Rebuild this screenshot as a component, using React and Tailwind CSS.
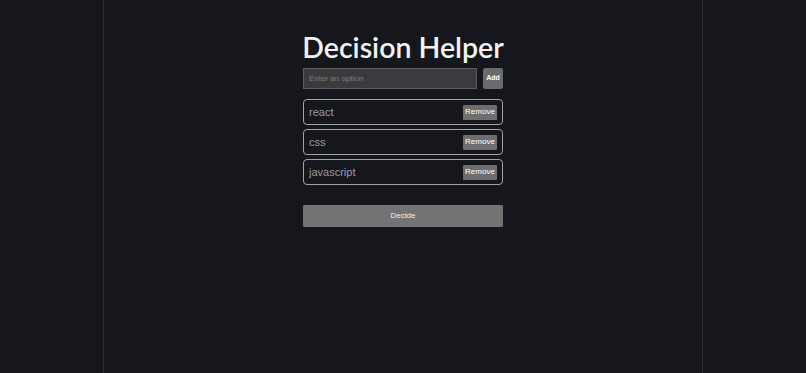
import React, { useState } from "react";

export default function App() {
  const [options, setOptions] = useState(["react", "css", "javascript"]);
  const [value, setValue] = useState("");

  const addOption = () => {
    if (!value.trim()) return;
    setOptions([...options, value.trim()]);
    setValue("");
  };

  return (
    <div className="min-h-[373px] w-full bg-[#16171d] font-['Liberation_Sans',Arial,sans-serif]">
      <div className="mx-auto flex min-h-[373px] w-[600px] flex-col items-center border-x border-[#2c2d33] pt-[27px]">
        <div className="w-[200px]">
          <h1 className="-mx-4 whitespace-nowrap text-center font-['Lato',sans-serif] text-[28.5px] font-semibold leading-[40px] text-[#f2f2f2]">
            Decision Helper
          </h1>

          <div className="mt-[1px] flex gap-[6px]">
            <input
              value={value}
              onChange={(e) => setValue(e.target.value)}
              placeholder="Enter an option"
              className="h-[21px] w-[174px] border border-[#5a5a5a] bg-[#3b3b3d] px-[5px] text-[8px] text-[#ddd] outline-none placeholder:text-[#7d7d7d]"
            />
            <button
              onClick={addOption}
              className="h-[21px] w-[20px] rounded-[2px] bg-[#6b6b6b] text-[7px] font-bold text-white"
            >
              Add
            </button>
          </div>

          <div className="mt-[10px] flex flex-col gap-[4px]">
            {options.map((opt, i) => (
              <div
                key={opt + i}
                className="flex h-[26px] items-center justify-between rounded-[4px] border border-[#a3a3a3] pl-[5px] pr-[5px]"
              >
                <span className="text-[11px] text-[#9a9ca3]">{opt}</span>
                <button
                  onClick={() => setOptions(options.filter((_, j) => j !== i))}
                  className="h-[15px] w-[34px] rounded-[1px] bg-[#6e6e6e] text-[8px] text-white"
                >
                  Remove
                </button>
              </div>
            ))}
          </div>

          <button className="mt-[20px] h-[22px] w-full rounded-[1px] bg-[#737373] text-[8px] text-[#f0f0f0]">
            Decide
          </button>
        </div>
      </div>
    </div>
  );
}
